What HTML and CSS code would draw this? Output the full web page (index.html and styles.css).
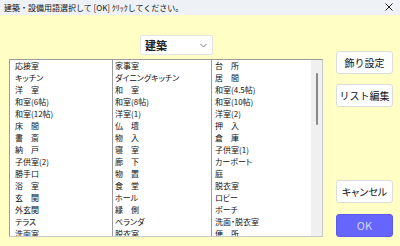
FILE: index.html
```html
<!DOCTYPE html>
<html lang="ja">
<head>
<meta charset="utf-8">
<link rel="stylesheet" href="styles.css">
</head>
<body>
<div class="titlebar">
  <span class="title">建築・設備用語選択して [OK] ｸﾘｯｸしてください。</span>
  <svg class="close" width="8" height="8" viewBox="0 0 8 8"><path d="M0.5 0.5L7.5 7.5M7.5 0.5L0.5 7.5" stroke="#222" stroke-width="1" fill="none"/></svg>
</div>
<div class="main">
  <div class="left">
    <div class="select">
      <span class="select-text">建築</span>
      <svg class="chev" width="7" height="5" viewBox="0 0 7 5"><path d="M0.5 1L3.5 4L6.5 1" stroke="#777" stroke-width="1" fill="none"/></svg>
    </div>
    <div class="list">
      <ul class="col col1">
        <li>応接室</li><li>キッチン</li><li>洋　室</li><li>和室(6帖)</li><li>和室(12帖)</li><li>床　間</li><li>書　斎</li><li>納　戸</li><li>子供室(2)</li><li>勝手口</li><li>浴　室</li><li>玄　関</li><li>外玄関</li><li>テラス</li><li>洗面室</li>
      </ul>
      <ul class="col col2">
        <li>家事室</li><li>ダイニングキッチン</li><li>和　室</li><li>和室(8帖)</li><li>洋室(1)</li><li>仏　壇</li><li>物　入</li><li>寝　室</li><li>廊　下</li><li>物　置</li><li>食　堂</li><li>ホール</li><li>縁　側</li><li>ベランダ</li><li>脱衣室</li>
      </ul>
      <ul class="col col3">
        <li>台　所</li><li>居　間</li><li>和室(4.5帖)</li><li>和室(10帖)</li><li>洋室(2)</li><li>押　入</li><li>倉　庫</li><li>子供室(1)</li><li>カーポート</li><li>庭</li><li>脱衣室</li><li>ロビー</li><li>ポーチ</li><li>洗面・脱衣室</li><li>便　所</li>
      </ul>
      <div class="scrollbar"><div class="thumb"></div></div>
    </div>
  </div>
  <div class="right">
    <button class="btn btn-deco">飾り設定</button>
    <button class="btn btn-edit">リスト編集</button>
    <button class="btn btn-cancel">キャンセル</button>
    <button class="btn btn-ok">OK</button>
  </div>
</div>
</body>
</html>
```
FILE: styles.css
```css
* { box-sizing: border-box; }
html, body { margin: 0; padding: 0; }
body {
  width: 400px;
  height: 246px;
  overflow: hidden;
  font-family: "Noto Sans CJK JP", "Noto Sans", sans-serif;
  background: #fffec4;
  color: #111;
}
.titlebar {
  height: 15px;
  background: #eef2f7;
  display: flex;
  align-items: center;
  justify-content: space-between;
  padding: 0 7px 0 4px;
}
.title {
  font-size: 8px;
  line-height: 15px;
  color: #111;
  white-space: nowrap;
}
.close { display: block; margin-top: -1px; }
.main {
  height: 231px;
  display: flex;
  padding-left: 9px;
  background: #fffec4;
}
.left {
  display: flex;
  flex-direction: column;
  padding-top: 20px;
}
.select {
  margin-left: 131px;
  width: 73px;
  height: 20px;
  background: #fff;
  border: 1px solid #e4e4e4;
  border-radius: 2px;
  display: flex;
  align-items: center;
  justify-content: space-between;
  padding: 0 5px 0 4px;
}
.select-text {
  font-size: 11px;
  font-weight: bold;
  line-height: 18px;
  color: #222;
}
.chev { display: block; }
.list {
  margin-top: 4px;
  width: 314px;
  height: 178px;
  background: #fff;
  border: 1px solid #9c9c9c;
  border-right-color: #c8c8c8;
  border-bottom-color: #c8c8c8;
  display: flex;
  overflow: hidden;
}
.col {
  list-style: none;
  margin: 0;
  padding: 0;
  font-size: 8px;
  line-height: 12px;
  white-space: nowrap;
  overflow: hidden;
  font-feature-settings: "palt";
}
.col li { height: 12px; }
.col1 { width: 103px; padding-left: 5px; border-right: 1px solid #9c9c9c; }
.col2 { width: 99px; padding-left: 2px; border-right: 1px solid #9c9c9c; }
.col3 { width: 99px; padding-left: 3px; }
.scrollbar {
  width: 11px;
  background: #f0f0f0;
  display: flex;
  justify-content: center;
  padding-top: 13px;
}
.thumb {
  width: 2px;
  height: 52px;
  background: #8a8a8a;
  border-radius: 1px;
}
.right {
  margin-left: 13px;
  width: 57px;
  padding-top: 36px;
  display: flex;
  flex-direction: column;
}
.btn {
  height: 23px;
  width: 57px;
  background: #fff;
  border: 1px solid #dcdcdc;
  border-radius: 3px;
  font-family: "Noto Sans CJK JP", sans-serif;
  font-size: 10px;
  color: #111;
  padding: 0;
  line-height: 21px;
  white-space: nowrap;
}
.btn-edit { margin-top: 10px; }
.btn-cancel { margin-top: 73px; font-feature-settings: "palt"; }
.btn-ok {
  margin-top: 11px;
  background: #6666ff;
  border-color: #5a5af0;
  color: #d4d4ff;
  font-size: 11px;
}
```
